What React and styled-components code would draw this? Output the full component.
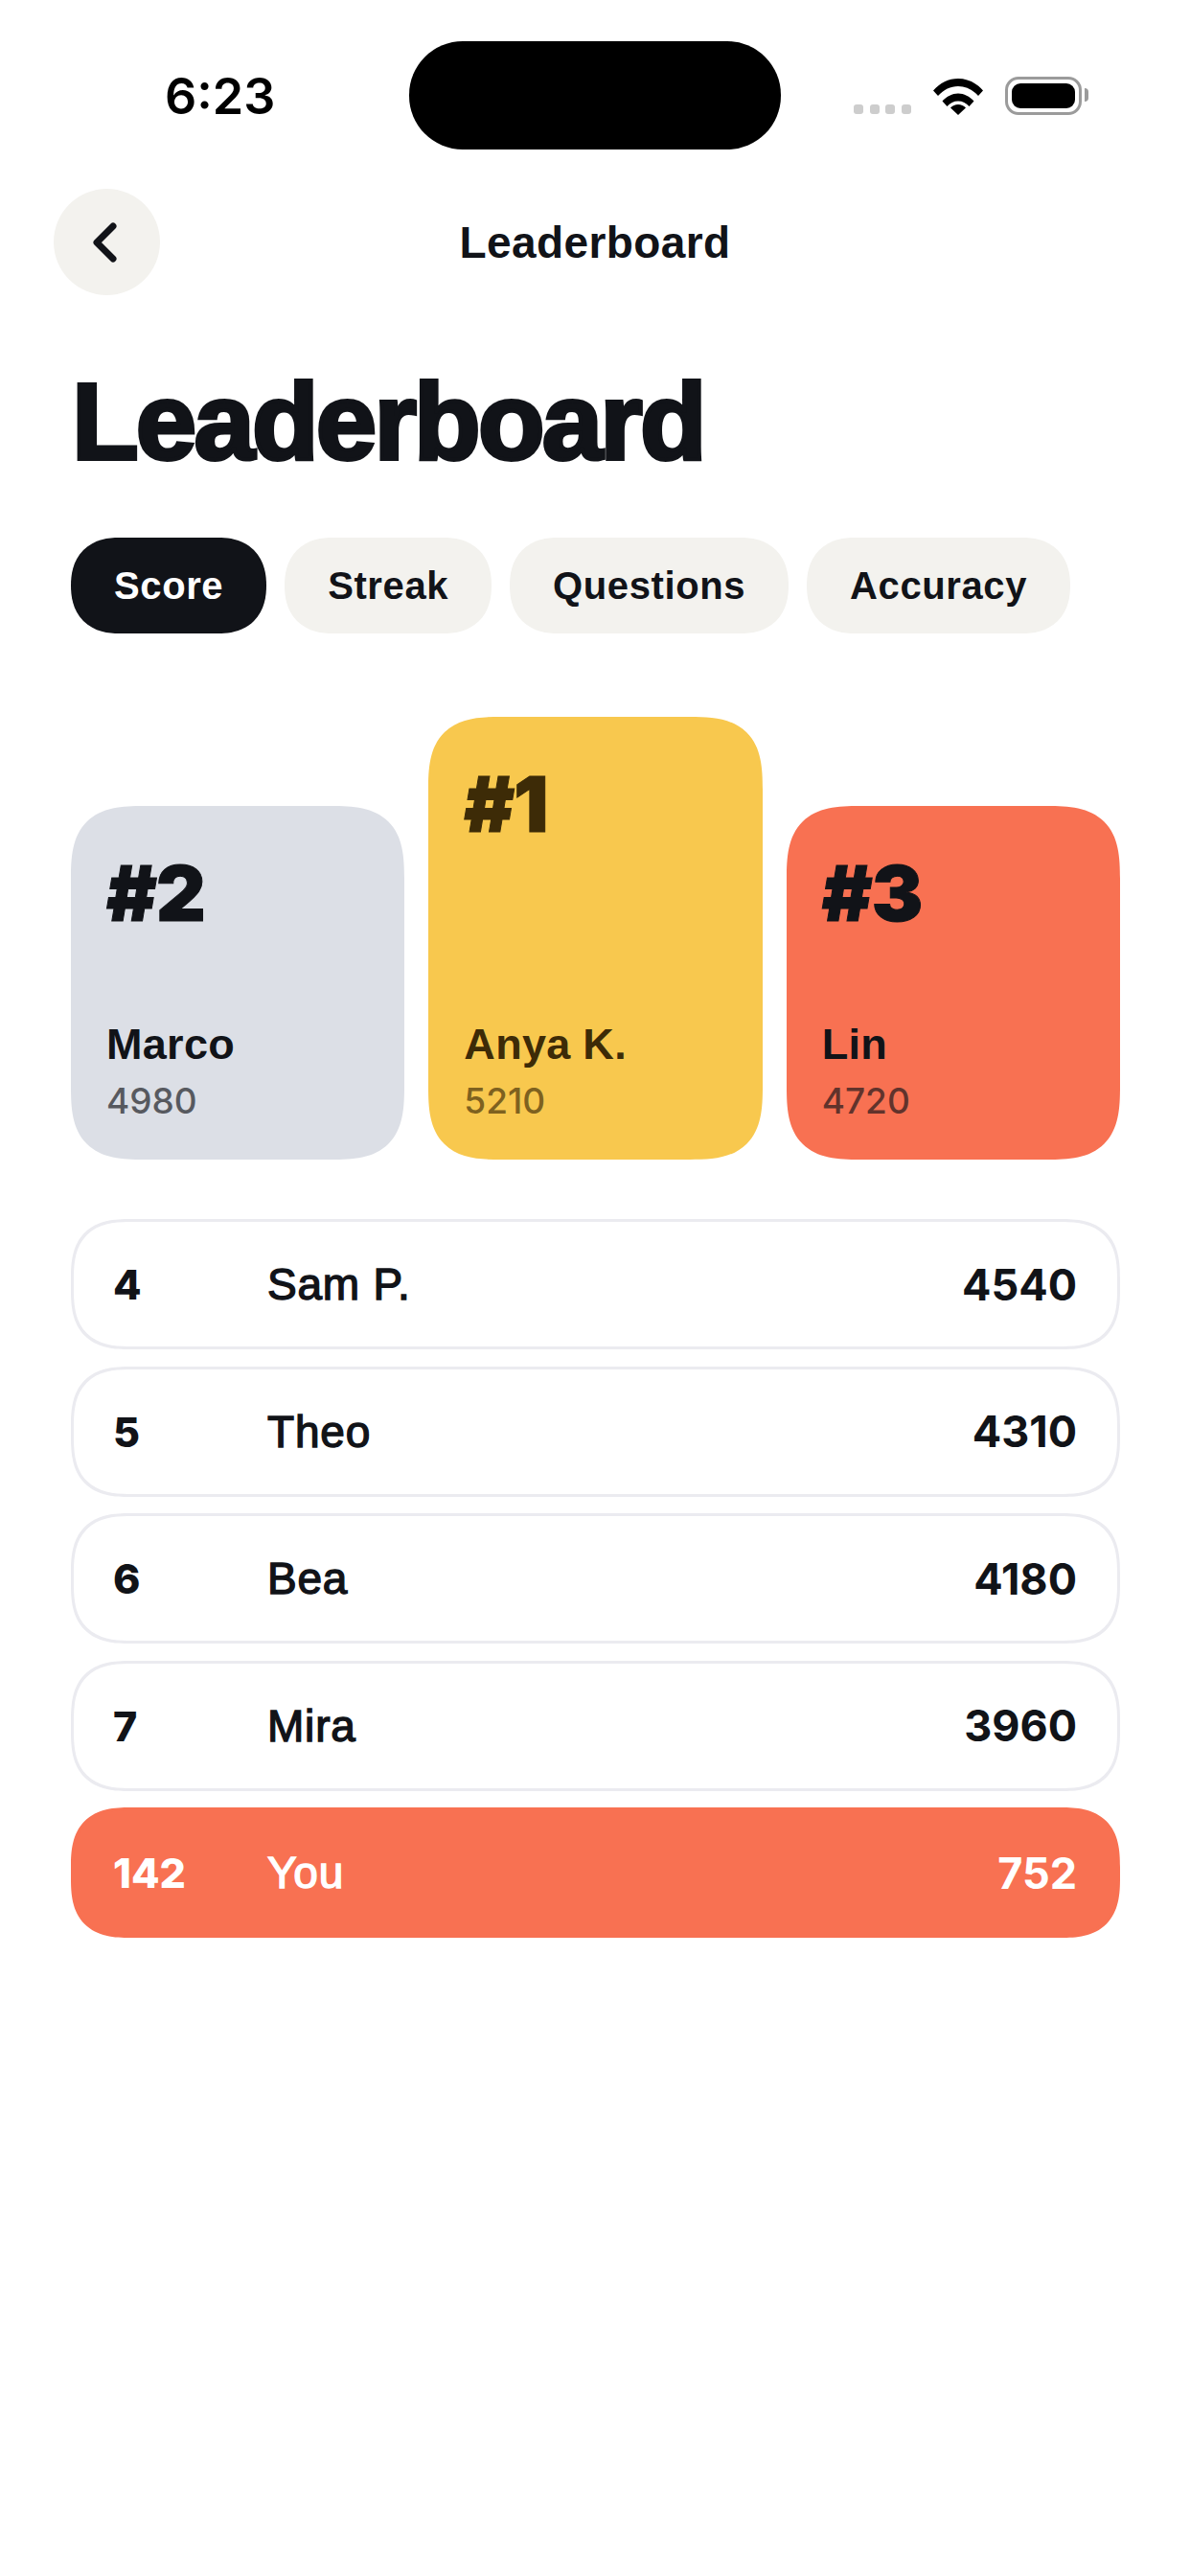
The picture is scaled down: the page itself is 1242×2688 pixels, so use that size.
import React from 'react';
import styled, { createGlobalStyle } from 'styled-components';

const GlobalStyle = createGlobalStyle`
    html, body {
        margin: 0;
        padding: 0;
        background: #fff;
    }
    body {
        font-family: "Liberation Sans", Arial, sans-serif;
        color: #111318;
    }
`;

const Screen = styled.div`
    width: 1242px;
    height: 2688px;
    overflow: hidden;
    background: #fff;
`;

const StatusBar = styled.div`
    display: flex;
    align-items: flex-start;
    padding-top: 43px;
`;

const Time = styled.div`
    width: 427px;
    box-sizing: border-box;
    padding: 27px 0 0 172px;
    font-family: "Inter", sans-serif;
    font-size: 52px;
    line-height: 62px;
    font-weight: 600;
    color: #000;
`;

const Island = styled.div`
    width: 388px;
    height: 113px;
    border-radius: 56px;
    background: #000;
`;

const StatusIcons = styled.div`
    display: flex;
    align-items: flex-end;
    margin: 37px 0 0 76px;
`;

const Dots = styled.div`
    display: flex;
    gap: 6.5px;
    margin-bottom: 1px;
`;

const Dot = styled.span`
    width: 10px;
    height: 10px;
    border-radius: 3px;
    background: #cdcdcd;
`;

const WifiIcon = styled.svg`
    display: block;
    width: 52px;
    height: 38px;
    margin-left: 23px;
`;

const Battery = styled.div`
    position: relative;
    width: 80px;
    height: 40px;
    margin-left: 23px;
    box-sizing: border-box;
    border: 3px solid #9b9b9b;
    border-radius: 14px;
    padding: 4px;
`;

const BatteryFill = styled.div`
    height: 100%;
    border-radius: 9px;
    background: #000;
`;

const BatteryNub = styled.div`
    position: absolute;
    right: -10px;
    top: 9px;
    width: 4px;
    height: 14px;
    border-radius: 0 7px 7px 0;
    background: #9b9b9b;
`;

const NavBar = styled.div`
    display: grid;
    grid-template-columns: 111px 1fr 111px;
    align-items: center;
    margin-top: 41px;
    padding: 0 56px;
`;

const BackButton = styled.button`
    width: 111px;
    height: 111px;
    border: 0;
    padding: 0 6px 0 0;
    border-radius: 50%;
    background: #f3f2ee;
    display: flex;
    align-items: center;
    justify-content: center;
`;

const NavTitle = styled.div`
    text-align: center;
    font-size: 46px;
    line-height: 56px;
    font-weight: 700;
    letter-spacing: 0.4px;
`;

const Content = styled.div`
    padding: 0 73px 0 74px;
`;

const Heading = styled.h1`
    margin: 67px 0 0 1px;
    font-family: "Liberation Sans", Arial, sans-serif;
    font-size: 114px;
    line-height: 130px;
    font-weight: 700;
    letter-spacing: -2.8px;
    -webkit-text-stroke: 4px #111318;
`;

const Tabs = styled.div`
    display: flex;
    gap: 19px;
    margin-top: 56px;
`;

const Tab = styled.div`
    height: 100px;
    box-sizing: border-box;
    padding: 0 45px;
    border-radius: 50px;
    corner-shape: superellipse(1.2);
    display: flex;
    align-items: center;
    font-size: 40px;
    font-weight: 700;
    letter-spacing: 0.6px;
    background: ${(p) => (p.$active ? '#111318' : '#f3f2ee')};
    color: ${(p) => (p.$active ? '#fff' : '#111318')};
`;

const Podium = styled.div`
    display: flex;
    align-items: flex-end;
    gap: 25px;
    margin-top: 87px;
`;

const PodiumCard = styled.div`
    flex: 1;
    height: ${(p) => p.$height}px;
    box-sizing: border-box;
    padding: 45px 37px 39px;
    border-radius: 76px;
    corner-shape: superellipse(1.5);
    display: flex;
    flex-direction: column;
    background: ${(p) => p.$bg};
    color: ${(p) => p.$ink};
`;

const Rank = styled.div`
    font-family: "Inter", sans-serif;
    font-size: 80px;
    line-height: 92px;
    font-weight: 900;
    letter-spacing: -1px;
    -webkit-text-stroke: 1px currentColor;
`;

const CardName = styled.div`
    margin-top: auto;
    font-size: 45px;
    line-height: 54px;
    font-weight: 700;
    letter-spacing: 0.3px;
`;

const CardScore = styled.div`
    margin-top: 10px;
    font-family: "Inter", sans-serif;
    font-size: 37px;
    line-height: 44px;
    font-weight: 500;
    opacity: 0.65;
`;

const Rows = styled.div`
    display: flex;
    flex-direction: column;
    gap: 17.5px;
    margin-top: 62px;
`;

const Row = styled.div`
    height: 136px;
    box-sizing: border-box;
    border-radius: 62px;
    corner-shape: superellipse(1.4);
    display: grid;
    grid-template-columns: 161px 1fr auto;
    align-items: center;
    border: 3px solid ${(p) => (p.$me ? '#f87152' : '#ebebf0')};
    padding: 0 42px 0 41px;
    background: ${(p) => (p.$me ? '#f87152' : '#fff')};
    color: ${(p) => (p.$me ? '#fff' : '#111318')};
`;

const RowRank = styled.div`
    font-family: "Inter", sans-serif;
    font-size: 43px;
    font-weight: 800;
`;

const RowName = styled.div`
    font-size: 46px;
    font-weight: 400;
    -webkit-text-stroke: 1.4px currentColor;
    letter-spacing: 0.8px;
`;

const RowScore = styled.div`
    font-family: "Inter", sans-serif;
    font-size: 45px;
    font-weight: 700;
`;

const podium = [
    { rank: '#2', name: 'Marco', score: 4980, height: 369, bg: '#dcdfe6', ink: '#111318' },
    { rank: '#1', name: 'Anya K.', score: 5210, height: 462, bg: '#f8c84e', ink: '#3d2b07' },
    { rank: '#3', name: 'Lin', score: 4720, height: 369, bg: '#f87152', ink: '#111318' },
];

const rows = [
    { rank: 4, name: 'Sam P.', score: 4540 },
    { rank: 5, name: 'Theo', score: 4310 },
    { rank: 6, name: 'Bea', score: 4180 },
    { rank: 7, name: 'Mira', score: 3960 },
    { rank: 142, name: 'You', score: 752, me: true },
];

const tabs = ['Score', 'Streak', 'Questions', 'Accuracy'];

const App = () => (
    <Screen>
        <GlobalStyle />
        <StatusBar>
            <Time>6:23</Time>
            <Island />
            <StatusIcons>
                <Dots>
                    <Dot />
                    <Dot />
                    <Dot />
                    <Dot />
                </Dots>
                <WifiIcon viewBox="0 0 52 38">
                    <path d="M0 12.500C7 4.500 16 0 26 0s19 4.500 26 12.500l-5 5.500C41 11.500 34 8 26 8S11 11.500 5 18z" />
                    <path d="M9.500 23.500C14 18.500 20 15.500 26 15.500s12 3 16.500 8l-5 5.500c-3-3.500-7-5.500-11.500-5.500S17.500 25.500 14.500 29z" />
                    <path d="M18 30.500c2-2 5-3.500 8-3.500s6 1.500 8 3.500L26 38z" />
                </WifiIcon>
                <Battery>
                    <BatteryFill />
                    <BatteryNub />
                </Battery>
            </StatusIcons>
        </StatusBar>
        <NavBar>
            <BackButton>
                <svg width="30" height="46" viewBox="0 0 30 46" fill="none">
                    <path d="M24 6 L7 23 L24 40" stroke="#111318" strokeWidth="7" strokeLinecap="round" strokeLinejoin="round" />
                </svg>
            </BackButton>
            <NavTitle>Leaderboard</NavTitle>
        </NavBar>
        <Content>
            <Heading>Leaderboard</Heading>
            <Tabs>
                {tabs.map((tab, index) => (
                    <Tab key={tab} $active={index === 0}>{tab}</Tab>
                ))}
            </Tabs>
            <Podium>
                {podium.map((card) => (
                    <PodiumCard key={card.rank} $height={card.height} $bg={card.bg} $ink={card.ink}>
                        <Rank>{card.rank}</Rank>
                        <CardName>{card.name}</CardName>
                        <CardScore>{card.score}</CardScore>
                    </PodiumCard>
                ))}
            </Podium>
            <Rows>
                {rows.map((row) => (
                    <Row key={row.rank} $me={row.me}>
                        <RowRank>{row.rank}</RowRank>
                        <RowName>{row.name}</RowName>
                        <RowScore>{row.score}</RowScore>
                    </Row>
                ))}
            </Rows>
        </Content>
    </Screen>
);

export default App;
